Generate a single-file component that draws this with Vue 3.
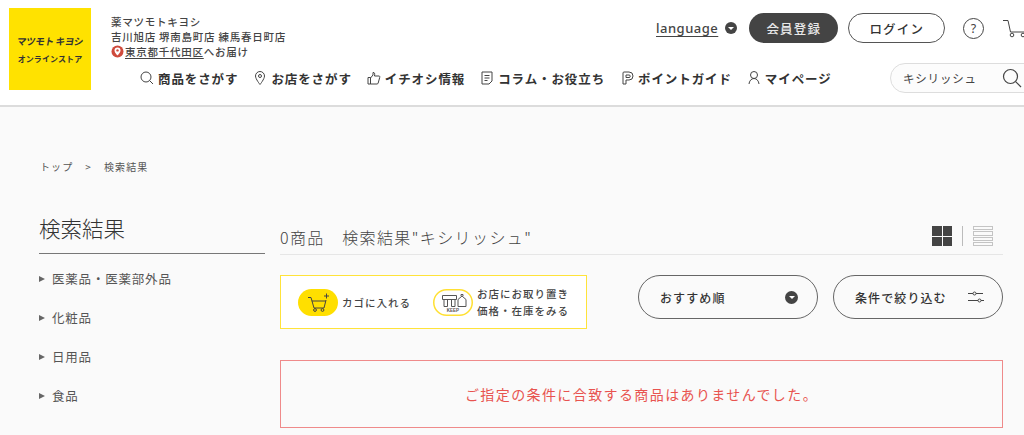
<template>
  <div class="page">
    <header class="header">
      <a class="logo">
        <span class="logo-mark">マツモト キヨシ</span>
        <span class="logo-sub">オンラインストア</span>
      </a>
      <div class="head-main">
        <div class="top-row">
          <div class="stores">
            <p>薬マツモトキヨシ</p>
            <p>吉川旭店 堺南島町店 練馬春日町店</p>
            <p class="deliver">
              <svg class="pin" viewBox="0 0 13 13" width="13" height="13">
                <circle cx="6.5" cy="6.5" r="6" fill="#cf4a3c" />
                <path d="M6.5 2.4a3 3 0 0 0-3 3c0 2 3 5 3 5s3-3 3-5a3 3 0 0 0-3-3z" fill="#fff" />
                <circle cx="6.5" cy="5.4" r="1.2" fill="#cf4a3c" />
              </svg>
              <u>東京都千代田区</u>へお届け
            </p>
          </div>
          <div class="tools">
            <span class="lang">language</span>
            <span class="dot"><i></i></span>
            <span class="btn dark">会員登録</span>
            <span class="btn light">ログイン</span>
            <svg class="help" viewBox="0 0 21 21" width="21" height="21">
              <circle cx="10.5" cy="10.5" r="10" fill="none" stroke="#444" stroke-width="1" />
              <text x="10.5" y="15" text-anchor="middle" font-size="12.5" fill="#444" font-family="Noto Sans, sans-serif">?</text>
            </svg>
            <svg class="cart" viewBox="0 0 24 24" width="24" height="24">
              <path d="M0 4.500h5l2.500 11.500h16.500" fill="none" stroke="#444" stroke-width="1" />
              <circle cx="9" cy="19" r="1.800" fill="none" stroke="#444" />
              <circle cx="20" cy="19" r="1.800" fill="none" stroke="#444" />
            </svg>
          </div>
        </div>
        <div class="nav-row">
          <nav class="nav">
            <a v-for="n in navItems" :key="n.label" class="nav-item">
              <svg viewBox="0 0 16 16" width="16" height="16" class="nav-icon" v-html="n.icon"></svg>
              <span>{{ n.label }}</span>
            </a>
          </nav>
          <div class="search">
            <span>キシリッシュ</span>
            <svg viewBox="0 0 20 20" width="20" height="20">
              <circle cx="8.5" cy="8.5" r="7" fill="none" stroke="#444" stroke-width="1.2" />
              <path d="M13.6 13.6L19 19" stroke="#444" stroke-width="1.2" />
            </svg>
          </div>
        </div>
      </div>
    </header>

    <div class="crumbs"><span>トップ</span><span class="sep">&gt;</span><span>検索結果</span></div>

    <div class="body">
      <aside class="side">
        <h2>検索結果</h2>
        <ul>
          <li v-for="c in cats" :key="c">{{ c }}</li>
        </ul>
      </aside>
      <main class="main">
        <div class="result-head">
          <h1>0商品　検索結果"キシリッシュ"</h1>
          <div class="views">
            <span class="grid-ico"><i></i><i></i><i></i><i></i></span>
            <span class="vline"></span>
            <span class="list-ico"><i></i><i></i><i></i><i></i></span>
          </div>
        </div>
        <div class="controls">
          <div class="legend">
            <svg class="pill" viewBox="0 0 40 27" width="40" height="27">
              <rect width="40" height="27" rx="13.500" fill="#ffdf00" />
              <path d="M10 8.500h3l3 10.500h10l2-8M13.800 12h14" fill="none" stroke="#444" stroke-width="1" />
              <circle cx="17" cy="21" r="1.400" fill="none" stroke="#444" />
              <circle cx="24.500" cy="21" r="1.400" fill="none" stroke="#444" />
              <path d="M28.500 4.500v5M26 7h5" stroke="#444" stroke-width="1" />
            </svg>
            <span class="legend-t">カゴに入れる</span>
            <svg class="pill keep" viewBox="0 0 40 27" width="40" height="27">
              <rect x=".75" y=".75" width="38.500" height="25.500" rx="12.750" fill="#fff" stroke="#ffe033" stroke-width="1.500" />
              <path d="M9.500 10.500V6.500h14v4zM11 10.500v7h3.500v-7M18.500 10.500v7h3.500v-7" fill="none" stroke="#555" stroke-width="1" />
              <path d="M25 17.500V10.500l4-3.500 4 3.500v7zM28 7v-1.500h2V7" fill="none" stroke="#555" stroke-width="1" />
              <text x="20" y="23" text-anchor="middle" font-size="4.500" font-weight="700" fill="#555" font-family="Liberation Sans, sans-serif">KEEP</text>
            </svg>
            <span class="legend-t two">お店にお取り置き<br />価格・在庫をみる</span>
          </div>
          <div class="sel sort">
            <span>おすすめ順</span>
            <span class="dot big"><i></i></span>
          </div>
          <div class="sel filter">
            <span>条件で絞り込む</span>
            <svg viewBox="0 0 16 12" width="16" height="12">
              <path d="M0 2.500h5M8 2.500h7M0 9.500h10M13 9.500h3" stroke="#444" stroke-width="1" />
              <circle cx="6.500" cy="2.500" r="1.500" fill="none" stroke="#444" />
              <circle cx="11.500" cy="9.500" r="1.500" fill="none" stroke="#444" />
            </svg>
          </div>
        </div>
        <div class="empty">ご指定の条件に合致する商品はありませんでした。</div>
      </main>
    </div>
  </div>
</template>

<script setup>
const S = 'fill="none" stroke="#444" stroke-width="1"'
const navItems = [
  { label: '商品をさがす', icon: `<circle cx="7" cy="7" r="5" ${S}/><path d="M10.600 10.600L14 14" ${S}/>` },
  { label: 'お店をさがす', icon: `<path d="M8 1.500a4.500 4.500 0 0 0-4.500 4.500c0 3 4.500 8.500 4.500 8.500s4.500-5.500 4.500-8.500A4.500 4.500 0 0 0 8 1.500z" ${S}/><circle cx="8" cy="6" r="1.500" ${S}/>` },
  { label: 'イチオシ情報', icon: `<path d="M2 7.500h2.500V14H2zM4.500 8l2.500-3V2.500c1.500-.5 2 1 1.500 3.500h4.500c.8 0 1 .8.700 1.500l-1.500 5.500c-.2.700-.6 1-1.200 1H4.500" ${S}/>` },
  { label: 'コラム・お役立ち', icon: `<path d="M3 2h10v9l-3 3H3zM5.500 5.500h5M5.500 8h5M5.500 10.500h3" ${S}/>` },
  { label: 'ポイントガイド', icon: `<path d="M4 14V3a1 1 0 0 1 1-1h5a4 4 0 0 1 0 8H7v4zM7 5v2.500h3a1.250 1.250 0 0 0 0-2.500z" ${S}/>` },
  { label: 'マイページ', icon: `<circle cx="8" cy="5" r="3.500" ${S}/><path d="M3 14c.3-3 2.200-5.500 5-5.500s4.700 2.500 5 5.500" ${S}/>` }
]
const cats = ['医薬品・医薬部外品', '化粧品', '日用品', '食品']
</script>

<style>
html, body { margin: 0; padding: 0; background: #fafafa; overflow: hidden; }
</style>

<style scoped>
.page {
  width: 1024px;
  height: 435px;
  overflow: hidden;
  background: #fafafa;
  color: #444;
  font-family: "Noto Sans CJK JP", "Noto Sans", sans-serif;
}
.header {
  box-sizing: border-box;
  height: 107px;
  width: 1100px;
  background: #fff;
  border-bottom: 2px solid #dcdcdc;
  display: flex;
  padding: 8px 0 0 9px;
}
.logo {
  width: 82px;
  height: 82px;
  background: #ffe200;
  display: flex;
  flex-direction: column;
  align-items: center;
  justify-content: center;
  flex: none;
  color: #333;
  padding-top: 2px;
  box-sizing: border-box;
}
.logo-mark { font-size: 9.500px; font-weight: 700; line-height: 14px; letter-spacing: -.3px; transform: skewX(-10deg); white-space: nowrap; }
.logo-sub { font-size: 8px; font-weight: 700; line-height: 16px; margin-top: 3px; letter-spacing: .1px; white-space: nowrap; }
.head-main { margin-left: 20px; flex: 1; }
.top-row { display: flex; height: 53px; }
.stores { width: 545px; padding-top: 6px; flex: none; }
.stores p { margin: 0; font-size: 10.500px; font-weight: 500; line-height: 15px; letter-spacing: .75px; white-space: nowrap; color: #444; }
.deliver { display: flex; align-items: center; }
.pin { margin-right: 1px; }
.deliver u { text-underline-offset: 2px; }
.tools { display: flex; align-items: center; height: 40px; }
.lang { font-family: "Noto Sans", sans-serif; font-size: 13px; font-weight: 500; letter-spacing: .5px; text-decoration: underline; text-underline-offset: 3px; margin-right: 7px; }
.dot { width: 12px; height: 12px; border-radius: 50%; background: #444; display: inline-flex; align-items: center; justify-content: center; flex: none; }
.dot.big { width: 13px; height: 13px; }
.dot i { width: 0; height: 0; border-left: 3px solid transparent; border-right: 3px solid transparent; border-top: 3px solid #fff; margin-top: 1px; }
.btn { box-sizing: border-box; height: 30px; border-radius: 15px; display: inline-flex; align-items: center; justify-content: center; font-size: 12.500px; font-weight: 500; letter-spacing: 1.200px; flex: none; }
.dark { width: 89px; background: #444; color: #e8e8e8; margin-left: 12px; }
.light { width: 97px; background: #fff; border: 1px solid #555; margin-left: 10px; color: #333; }
.help { margin-left: 18px; flex: none; }
.cart { margin-left: 19px; flex: none; }
.nav-row { display: flex; align-items: center; height: 34px; }
.nav { display: flex; width: 779px; padding-left: 28px; box-sizing: border-box; flex: none; }
.nav-item { display: flex; align-items: center; margin-right: 14px; font-size: 12.500px; font-weight: 700; letter-spacing: .9px; white-space: nowrap; color: #333; }
.nav-icon { margin-right: 3px; flex: none; }
.search { box-sizing: border-box; width: 160px; height: 30px; border: 1px solid #ddd; border-radius: 15px; background: #fcfcfc; display: flex; align-items: center; padding-left: 12px; font-size: 11.500px; letter-spacing: .8px; flex: none; }
.search svg { margin-left: 25px; flex: none; }
.crumbs { margin: 51px 0 0 40px; height: 16px; display: flex; align-items: center; font-size: 10px; letter-spacing: 1.100px; color: #555; }
.sep { margin: 0 12px; }
.body { display: flex; margin-top: 37px; padding-left: 39px; }
.side { width: 226px; flex: none; }
.side h2 { margin: 0; height: 43px; font-size: 21.500px; font-weight: 300; line-height: 34px; border-bottom: 1px solid #777; color: #333; box-sizing: border-box; }
.side ul { list-style: none; margin: 0; padding: 5px 0 0 0; }
.side li { height: 39px; display: flex; align-items: center; font-size: 12.500px; letter-spacing: .8px; color: #555; }
.side li::before { content: ""; width: 0; height: 0; border-top: 3.500px solid transparent; border-bottom: 3.500px solid transparent; border-left: 6px solid #666; margin-right: 7px; }
.main { margin-left: 15px; width: 723px; flex: none; }
.result-head { box-sizing: border-box; height: 44px; padding-top: 14px; display: flex; justify-content: space-between; border-bottom: 1px solid #e6e6e6; }
.result-head h1 { margin: 0; font-size: 16px; font-weight: 300; line-height: 24px; letter-spacing: 1.400px; color: #444; }
.views { display: flex; align-items: flex-start; margin-top: 1px; padding-right: 10px; }
.grid-ico { display: grid; grid-template-columns: 9.500px 9.500px; grid-template-rows: 9.500px 9.500px; gap: 1px; width: 20px; height: 20px; }
.grid-ico i { background: #444; }
.vline { width: 1px; height: 20px; background: #bbb; margin: 0 10px; }
.list-ico { display: flex; flex-direction: column; gap: 1px; width: 20px; height: 20px; }
.list-ico i { box-sizing: border-box; height: 4.250px; border: 1px solid #c4c4c4; }
.controls { display: flex; margin-top: 20px; }
.legend { box-sizing: border-box; width: 307px; height: 54px; background: #fff; border: 1px solid #ffe33a; display: flex; align-items: center; padding-left: 17px; flex: none; }
.pill { flex: none; display: block; }
.keep { margin-left: 22px; }
.legend-t { font-size: 10.500px; font-weight: 500; letter-spacing: 1px; margin-left: 4px; white-space: nowrap; color: #444; }
.legend-t.two { line-height: 17px; }
.sel { box-sizing: border-box; height: 44px; border: 1px solid #666; border-radius: 22px; display: flex; align-items: center; justify-content: space-between; font-size: 12px; font-weight: 500; letter-spacing: 1.100px; color: #333; flex: none; }
.sort { width: 180px; margin-left: 51px; padding: 0 19px 0 21px; }
.filter { width: 170px; margin-left: 15px; padding: 0 18px 0 21px; }
.empty { box-sizing: border-box; margin-top: 31px; height: 68px; width: 723px; border: 1px solid #ef8a8a; color: #e8534f; display: flex; align-items: center; justify-content: center; font-size: 14px; letter-spacing: 1.400px; }
</style>
